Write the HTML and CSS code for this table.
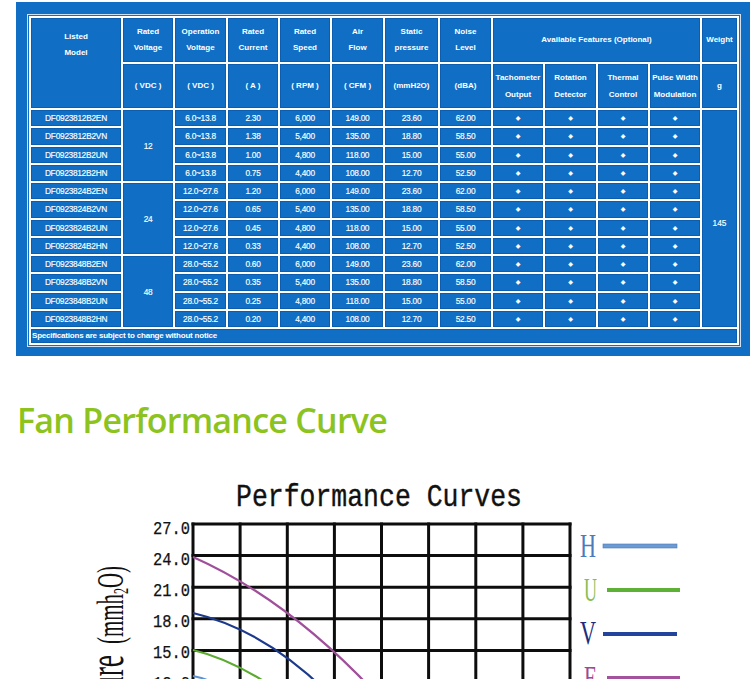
FILE: index.html
```html
<!DOCTYPE html>
<html lang="en">
<head>
<meta charset="utf-8">
<title>Fan Specifications</title>
<link rel="stylesheet" href="styles.css">
</head>
<body>
<section class="spec">
  <div class="spec-frame">
    <table class="spec-table">
      <colgroup>
        <col class="c-model"><col class="c50"><col class="c51"><col class="c50"><col class="c50"><col class="c51"><col class="c53"><col class="c51"><col class="c50"><col class="c51"><col class="c50"><col class="c50"><col class="c35">
      </colgroup>
      <thead>
        <tr class="h1">
          <th rowspan="2" class="listed">Listed<br>Model</th>
          <th>Rated<br>Voltage</th>
          <th>Operation<br>Voltage</th>
          <th>Rated<br>Current</th>
          <th>Rated<br>Speed</th>
          <th>Air<br>Flow</th>
          <th>Static<br>pressure</th>
          <th>Noise<br>Level</th>
          <th colspan="4">Available Features (Optional)</th>
          <th>Weight</th>
        </tr>
        <tr class="h2">
          <th>( VDC )</th>
          <th>( VDC )</th>
          <th>( A )</th>
          <th>( RPM )</th>
          <th>( CFM )</th>
          <th>(mmH2O)</th>
          <th>(dBA)</th>
          <th class="feat">Tachometer<br>Output</th>
          <th class="feat">Rotation<br>Detector</th>
          <th class="feat">Thermal<br>Control</th>
          <th class="feat">Pulse Width<br>Modulation</th>
          <th>g</th>
        </tr>
      </thead>
      <tbody>
        <tr class="d"><td>DF0923812B2EN</td><td rowspan="4">12</td><td>6.0~13.8</td><td>2.30</td><td>6,000</td><td>149.00</td><td>23.60</td><td>62.00</td><td class="dot">◆</td><td class="dot">◆</td><td class="dot">◆</td><td class="dot">◆</td><td rowspan="12" class="wt">145</td></tr>
        <tr class="d"><td>DF0923812B2VN</td><td>6.0~13.8</td><td>1.38</td><td>5,400</td><td>135.00</td><td>18.80</td><td>58.50</td><td class="dot">◆</td><td class="dot">◆</td><td class="dot">◆</td><td class="dot">◆</td></tr>
        <tr class="d"><td>DF0923812B2UN</td><td>6.0~13.8</td><td>1.00</td><td>4,800</td><td>118.00</td><td>15.00</td><td>55.00</td><td class="dot">◆</td><td class="dot">◆</td><td class="dot">◆</td><td class="dot">◆</td></tr>
        <tr class="d"><td>DF0923812B2HN</td><td>6.0~13.8</td><td>0.75</td><td>4,400</td><td>108.00</td><td>12.70</td><td>52.50</td><td class="dot">◆</td><td class="dot">◆</td><td class="dot">◆</td><td class="dot">◆</td></tr>
        <tr class="d"><td>DF0923824B2EN</td><td rowspan="4">24</td><td>12.0~27.6</td><td>1.20</td><td>6,000</td><td>149.00</td><td>23.60</td><td>62.00</td><td class="dot">◆</td><td class="dot">◆</td><td class="dot">◆</td><td class="dot">◆</td></tr>
        <tr class="d"><td>DF0923824B2VN</td><td>12.0~27.6</td><td>0.65</td><td>5,400</td><td>135.00</td><td>18.80</td><td>58.50</td><td class="dot">◆</td><td class="dot">◆</td><td class="dot">◆</td><td class="dot">◆</td></tr>
        <tr class="d"><td>DF0923824B2UN</td><td>12.0~27.6</td><td>0.45</td><td>4,800</td><td>118.00</td><td>15.00</td><td>55.00</td><td class="dot">◆</td><td class="dot">◆</td><td class="dot">◆</td><td class="dot">◆</td></tr>
        <tr class="d"><td>DF0923824B2HN</td><td>12.0~27.6</td><td>0.33</td><td>4,400</td><td>108.00</td><td>12.70</td><td>52.50</td><td class="dot">◆</td><td class="dot">◆</td><td class="dot">◆</td><td class="dot">◆</td></tr>
        <tr class="d"><td>DF0923848B2EN</td><td rowspan="4">48</td><td>28.0~55.2</td><td>0.60</td><td>6,000</td><td>149.00</td><td>23.60</td><td>62.00</td><td class="dot">◆</td><td class="dot">◆</td><td class="dot">◆</td><td class="dot">◆</td></tr>
        <tr class="d"><td>DF0923848B2VN</td><td>28.0~55.2</td><td>0.35</td><td>5,400</td><td>135.00</td><td>18.80</td><td>58.50</td><td class="dot">◆</td><td class="dot">◆</td><td class="dot">◆</td><td class="dot">◆</td></tr>
        <tr class="d"><td>DF0923848B2UN</td><td>28.0~55.2</td><td>0.25</td><td>4,800</td><td>118.00</td><td>15.00</td><td>55.00</td><td class="dot">◆</td><td class="dot">◆</td><td class="dot">◆</td><td class="dot">◆</td></tr>
        <tr class="d"><td>DF0923848B2HN</td><td>28.0~55.2</td><td>0.20</td><td>4,400</td><td>108.00</td><td>12.70</td><td>52.50</td><td class="dot">◆</td><td class="dot">◆</td><td class="dot">◆</td><td class="dot">◆</td></tr>
      </tbody>
      <tfoot>
        <tr class="f"><td colspan="13">Specifications are subject to change without notice</td></tr>
      </tfoot>
    </table>
  </div>
</section>

<h2 class="title">Fan Performance Curve</h2>

<svg class="chart" width="750" height="230" viewBox="0 0 750 230" xmlns="http://www.w3.org/2000/svg">
  <text class="chart-title" x="236" y="46" textLength="286" lengthAdjust="spacingAndGlyphs">Performance Curves</text>

  <g class="grid">
    <line x1="193" y1="64" x2="193" y2="240"/>
    <line x1="240.1" y1="64" x2="240.1" y2="240"/>
    <line x1="287.3" y1="64" x2="287.3" y2="240"/>
    <line x1="334.4" y1="64" x2="334.4" y2="240"/>
    <line x1="381.5" y1="64" x2="381.5" y2="240"/>
    <line x1="428.6" y1="64" x2="428.6" y2="240"/>
    <line x1="475.8" y1="64" x2="475.8" y2="240"/>
    <line x1="522.9" y1="64" x2="522.9" y2="240"/>
    <line x1="570" y1="64" x2="570" y2="240"/>
    <line x1="193" y1="64" x2="570" y2="64"/>
    <line x1="193" y1="95.6" x2="570" y2="95.6"/>
    <line x1="193" y1="127.2" x2="570" y2="127.2"/>
    <line x1="193" y1="158.8" x2="570" y2="158.8"/>
    <line x1="193" y1="190.4" x2="570" y2="190.4"/>
    <line x1="193" y1="222" x2="570" y2="222"/>
  </g>

  <g class="ticks">
    <text x="190" y="74" textLength="37" lengthAdjust="spacingAndGlyphs">27.0</text>
    <text x="190" y="105" textLength="37" lengthAdjust="spacingAndGlyphs">24.0</text>
    <text x="190" y="136" textLength="37" lengthAdjust="spacingAndGlyphs">21.0</text>
    <text x="190" y="167" textLength="37" lengthAdjust="spacingAndGlyphs">18.0</text>
    <text x="190" y="198" textLength="37" lengthAdjust="spacingAndGlyphs">15.0</text>
    <text x="190" y="229" textLength="37" lengthAdjust="spacingAndGlyphs">12.0</text>
  </g>

  <text class="axis-title" transform="translate(123,106) rotate(-90) scale(0.55,1)"><tspan class="big">Pressure</tspan><tspan dx="20">(mmh</tspan><tspan class="sub" dy="5">2</tspan><tspan dy="-5">O)</tspan></text>

  <path class="curve c-e" d="M193,97 Q290,140 380,238"/>
  <path class="curve c-v" d="M193,153 Q265,170 330,235"/>
  <path class="curve c-u" d="M193,190 Q235,200 285,235"/>
  <path class="curve c-h" d="M193,216 Q215,220 235,235"/>

  <g class="legend">
    <text class="lg-h" x="580" y="97" textLength="16" lengthAdjust="spacingAndGlyphs">H</text>
    <rect class="bar-h" x="603" y="84" width="74" height="4"/>
    <text class="lg-u" x="584" y="141" textLength="13" lengthAdjust="spacingAndGlyphs">U</text>
    <rect class="bar-u" x="607" y="128" width="73" height="4"/>
    <text class="lg-v" x="580" y="184" textLength="16" lengthAdjust="spacingAndGlyphs">V</text>
    <rect class="bar-v" x="603" y="172" width="74" height="4"/>
    <text class="lg-e" x="584" y="229" textLength="13" lengthAdjust="spacingAndGlyphs">E</text>
    <rect class="bar-e" x="607" y="216" width="73" height="4"/>
  </g>
</svg>
</body>
</html>
```

FILE: styles.css
```css
html, body {
  margin: 0;
  padding: 0;
  background: #ffffff;
  overflow: hidden;
}

body {
  font-family: "Liberation Sans", Arial, sans-serif;
  width: 750px;
}

/* ---------- spec panel ---------- */
.spec {
  margin: 2px 0 0 16px;
  background: #106fc5;
  padding: 12px 0 9px 11px;
}

.spec-frame {
  display: inline-block;
  border: 1px solid #cfe2f4;
  padding: 1px;
  vertical-align: top;
}

.spec-table {
  table-layout: fixed;
  width: 710px;
  border-collapse: separate;
  border-spacing: 2px;
  background: #ffffff;
  color: #ffffff;
  font-size: 8px;
}

.c-model { width: 90px; }
.c50 { width: 50px; }
.c51 { width: 51px; }
.c53 { width: 53px; }
.c35 { width: 35px; }

.spec-table th,
.spec-table td {
  background: #106fc5;
  padding: 0;
  text-align: center;
  vertical-align: middle;
  box-shadow: inset 0 0 0 1px rgba(0, 50, 120, 0.28);
  overflow: hidden;
  white-space: nowrap;
}

.spec-table th {
  font-weight: bold;
  line-height: 16px;
}

.h1 th,
.h2 th {
  height: 44px;
}

.spec-table th.listed {
  vertical-align: top;
  padding-top: 11px;
}

.spec-table th.feat {
  line-height: 17px;
}

.d td {
  height: 16.25px;
  line-height: 10px;
  font-size: 8.3px;
  letter-spacing: -0.25px;
  -webkit-text-stroke: 0.15px #ffffff;
}

.d td.dot {
  font-size: 6px;
  font-family: "DejaVu Sans", sans-serif;
}

.d td.wt {
  padding-top: 8px;
  letter-spacing: 0;
}

.f td {
  height: 14px;
  line-height: 14px;
  text-align: left;
  font-weight: bold;
  letter-spacing: -0.2px;
  padding-left: 1px;
}

/* ---------- title ---------- */
.title {
  margin: 42px 0 0 17px;
  font-family: "Open Sans", sans-serif;
  font-weight: 600;
  font-size: 34px;
  line-height: 44px;
  color: #8cc31f;
  letter-spacing: -0.75px;
}

/* ---------- chart ---------- */
.chart {
  display: block;
  margin-top: 18px;
}

.chart-title {
  font-family: "Liberation Mono", monospace;
  font-size: 32px;
  fill: #111111;
  stroke: #111111;
  stroke-width: 0.4;
}

.grid line {
  stroke: #0d0d0d;
  stroke-width: 3;
  stroke-linecap: square;
}

.ticks text {
  font-family: "Liberation Mono", monospace;
  font-size: 18px;
  fill: #111111;
  stroke: #111111;
  stroke-width: 0.25;
  text-anchor: end;
}

.axis-title {
  font-family: "Liberation Serif", serif;
  font-size: 38px;
  fill: #111111;
  text-anchor: end;
}

.axis-title .big {
  font-size: 50px;
}

.axis-title .sub {
  font-size: 22px;
}

.curve {
  fill: none;
  stroke-width: 2.2;
}
.c-e { stroke: #a0509b; }
.c-v { stroke: #1c3a8c; }
.c-u { stroke: #5aab2e; }
.c-h { stroke: #5b93d0; }

.legend text {
  font-family: "Liberation Serif", serif;
  font-size: 33px;
}
.lg-h { fill: #4a7cbd; }
.lg-u { fill: #86bd55; }
.lg-v { fill: #1d2d7e; }
.lg-e { fill: #9b4a93; }

.bar-h { fill: #6c9bd3; stroke: #4a79b5; stroke-width: 0.6; }
.bar-u { fill: #5db134; }
.bar-v { fill: #22449d; }
.bar-e { fill: #a5529d; }
```
